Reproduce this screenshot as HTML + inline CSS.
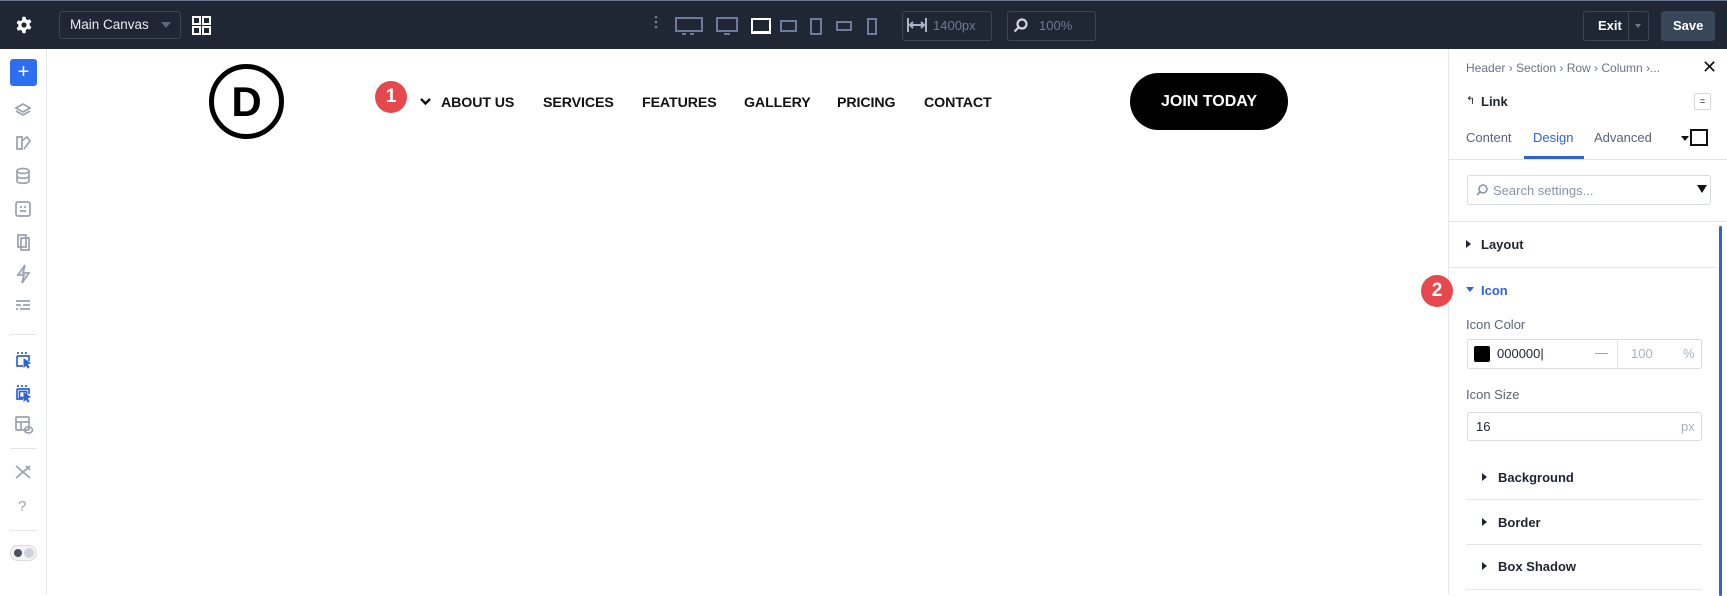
<!DOCTYPE html>
<html><head><meta charset="utf-8"><style>
*{box-sizing:border-box;margin:0;padding:0}
body{width:1727px;height:594px;overflow:hidden;background:#fff;font-family:"Liberation Sans",sans-serif;position:relative}
.a{position:absolute}
.top{left:0;top:0;width:1727px;height:49px;background:#1f2734;border-top:1px solid #6c7890}
.side{left:0;top:49px;width:47px;height:545px;background:#fff;border-right:1px solid #e3e6ea}
.panel{left:1448px;top:49px;width:279px;height:545px;background:#fff;border-left:1px solid #e3e6ea}
.nav{font-size:14.2px;font-weight:bold;color:#111;top:95px;letter-spacing:-0.1px}
.gi{color:#8b93a3;font-size:13px}
.lbl{font-size:13px;color:#5a6478}
.sec{font-size:13px;font-weight:bold;color:#1e2430}
.tri{width:0;height:0;border-top:4px solid transparent;border-bottom:4px solid transparent;border-left:5px solid #1e2430}
.inp{border:1px solid #d8dce2;border-radius:3px;background:#fff}
.line{height:1px;background:#e2e5e9}
</style></head><body>
<div class="a top">
 <svg class="a" style="left:15px;top:15px" width="18" height="18" viewBox="0 0 24 24"><path fill="#fff" fill-rule="evenodd" d="M10 1h4l.6 3.2a8 8 0 012.2 1.3l3.1-1.1 2 3.5-2.5 2.1a8 8 0 010 2.6l2.5 2.1-2 3.5-3.1-1.1a8 8 0 01-2.2 1.3L14 23h-4l-.6-3.2a8 8 0 01-2.2-1.3l-3.1 1.1-2-3.5 2.5-2.1a8 8 0 010-2.6L2.1 9.3l2-3.5 3.1 1.1a8 8 0 012.2-1.3zM12 8.5a3.5 3.5 0 100 7 3.5 3.5 0 000-7z"/></svg>
 <div class="a inp" style="left:59px;top:10px;width:122px;height:28px;background:#1f2734;border-color:#3b4556"></div>
 <div class="a" style="left:70px;top:16px;color:#e8ebf0;font-size:13.5px">Main Canvas</div>
 <div class="a" style="left:161px;top:21px;border-left:5px solid transparent;border-right:5px solid transparent;border-top:6px solid #5d6880"></div>
 <svg class="a" style="left:192px;top:15px" width="19" height="19" viewBox="0 0 19 19" fill="none" stroke="#fff" stroke-width="2"><rect x="1" y="1" width="7" height="7"/><rect x="11" y="1" width="7" height="7"/><rect x="1" y="11" width="7" height="7"/><rect x="11" y="11" width="7" height="7"/></svg>
 <svg class="a" style="left:650px;top:12px" width="230" height="24" fill="none" stroke="#6d7c9c" stroke-width="2">
  <circle cx="6" cy="4" r="1.3" fill="#6d7c9c" stroke="none"/><circle cx="6" cy="9" r="1.3" fill="#6d7c9c" stroke="none"/><circle cx="6" cy="14" r="1.3" fill="#6d7c9c" stroke="none"/>
  <rect x="26" y="5" width="26" height="13"/><path d="M32 21h4M40 21h4"/>
  <rect x="67" y="5" width="20" height="13"/><path d="M74 21h6"/>
  <rect x="102" y="6" width="18" height="13" stroke="#fff"/><path d="M101 20h20" stroke="#fff"/>
  <rect x="131" y="8" width="15" height="10"/>
  <rect x="161" y="6" width="10" height="15"/>
  <rect x="187" y="9" width="14" height="8"/>
  <rect x="218" y="6" width="8" height="15"/>
 </svg>
 <div class="a inp" style="left:902px;top:10px;width:90px;height:30px;background:#1f2734;border-color:#3b4556"></div>
 <svg class="a" style="left:907px;top:17px" width="20" height="14" stroke="#aab4c8" stroke-width="2" fill="none"><path d="M1 0v14M19 0v14M3 7h14M6 4l-3 3 3 3M14 4l3 3-3 3"/></svg>
 <div class="a" style="left:933px;top:17px;color:#6d7a93;font-size:13px">1400px</div>
 <div class="a inp" style="left:1007px;top:10px;width:89px;height:30px;background:#1f2734;border-color:#3b4556"></div>
 <svg class="a" style="left:1013px;top:17px" width="15" height="15" fill="none" stroke="#d0d6e0" stroke-width="2.2"><circle cx="9" cy="6" r="4.5"/><path d="M5.5 9.5L1.5 13.5"/></svg>
 <div class="a" style="left:1039px;top:17px;color:#6d7a93;font-size:13px">100%</div>
 <div class="a inp" style="left:1583px;top:10px;width:66px;height:30px;background:#1f2734;border-color:#3b4556"></div>
 <div class="a" style="left:1598px;top:17px;color:#fff;font-size:13px;font-weight:bold">Exit</div>
 <div class="a" style="left:1628px;top:10px;width:1px;height:30px;background:#3b4556"></div>
 <div class="a" style="left:1635px;top:23px;border-left:3px solid transparent;border-right:3px solid transparent;border-top:4px solid #6d7a93"></div>
 <div class="a" style="left:1661px;top:10px;width:54px;height:30px;background:#394559;border-radius:3px"></div>
 <div class="a" style="left:1673px;top:17px;color:#fff;font-size:13px;font-weight:bold">Save</div>
</div>

<div class="a side">
 <div class="a" style="left:10px;top:10px;width:27px;height:27px;background:#2e6ff0;border-radius:3px;color:#fff;font-size:20px;text-align:center;line-height:26px">+</div>
 <svg class="a" style="left:13px;top:52px" width="22" height="340" fill="none" stroke="#9aa1af" stroke-width="1.7">
  <path d="M10 3l7 4-7 4-7-4zM3 10l7 4 7-4"/>
  <path d="M4 48v-12h5v12h-5zM9 40l5-4 3 4-6 8"/>
  <ellipse cx="10" cy="70" rx="6" ry="2.5"/><path d="M4 70v10c0 3 12 3 12 0v-10M4 75c0 3 12 3 12 0"/>
  <rect x="3" y="101" width="14" height="14" rx="2"/><path d="M7 106h2M11 106h2M7 110h6"/>
  <path d="M8 137h8v12h-8zM5 134h8v12h-8z"/>
  <path d="M12 132l-7 10h6l-2 8 7-10h-6z" transform="translate(0,32)"/>
  <path d="M3 200h14M3 204h5M10 204h7M3 208h2M7 208h10" />
  <path d="M4 252h2M8 252h2M12 252h2M4 255v10h6M4 255h12v5" stroke="#2e63d8"/><path d="M11 258l6 4-3 1 2 3-1 1-2-3-2 2z" fill="#2e63d8" stroke="#2e63d8" stroke-width="1"/>
  <path d="M4 285h2M8 285h2M12 285h2M4 288v10h6M4 288h12v5" stroke="#2e63d8"/><rect x="6.5" y="290.5" width="7" height="6" stroke="#2e63d8"/><path d="M11 292l6 4-3 1 2 3-1 1-2-3-2 2z" fill="#2e63d8" stroke="#2e63d8" stroke-width="1"/>
  <rect x="3" y="316" width="13" height="13" rx="1"/><path d="M3 321h13M8 321v8"/><ellipse cx="15.5" cy="329" rx="4" ry="3"/>
 </svg>
 <div class="a line" style="left:10px;top:285px;width:27px"></div>
 <div class="a line" style="left:10px;top:399px;width:27px"></div>
 <svg class="a" style="left:14px;top:415px" width="18" height="16" fill="none" stroke="#9aa1af" stroke-width="1.8"><path d="M2 2l14 12M16 2L2 14M12 2l4 4"/></svg>
 <div class="a" style="left:18px;top:449px;color:#9aa1af;font-size:15px">?</div>
 <div class="a line" style="left:10px;top:481px;width:27px"></div>
 <div class="a" style="left:10px;top:496px;width:27px;height:16px;border:1px solid #d7dbe1;border-radius:8px;background:#f3f4f6"></div>
 <div class="a" style="left:14px;top:500px;width:8px;height:8px;border-radius:50%;background:#4b5262"></div>
 <div class="a" style="left:24px;top:499px;width:10px;height:10px;border-radius:50%;background:#d0d4da"></div>
</div>

<div class="a" style="left:209px;top:64px;width:75px;height:75px;border:5px solid #000;border-radius:50%;display:flex;align-items:center;justify-content:center;font-size:42px;font-weight:bold;color:#000;padding-top:1px">D</div>
<div class="a" style="left:375px;top:81px;width:32px;height:32px;border-radius:50%;background:#e5484d;color:#fff;font-weight:bold;font-size:19px;text-align:center;line-height:32px">1</div>
<svg class="a" style="left:420px;top:98px" width="11" height="8"><path d="M1 1l4.5 4.5L10 1" stroke="#111" stroke-width="2.4" fill="none"/></svg>
<div class="a nav" style="left:441px">ABOUT US</div>
<div class="a nav" style="left:543px">SERVICES</div>
<div class="a nav" style="left:642px">FEATURES</div>
<div class="a nav" style="left:744px">GALLERY</div>
<div class="a nav" style="left:837px">PRICING</div>
<div class="a nav" style="left:924px">CONTACT</div>
<div class="a" style="left:1130px;top:73px;width:158px;height:57px;border-radius:29px;background:#000;color:#fff;font-size:16px;font-weight:bold;text-align:center;line-height:57px">JOIN TODAY</div>

<div class="a panel">
 <div class="a" style="left:17px;top:12px;font-size:12px;color:#6b7383">Header › Section › Row › Column ›...</div>
 <div class="a" style="left:253px;top:8px;font-size:18px;color:#111">✕</div>
 <div class="a" style="left:17px;top:45px;font-size:11px;color:#333">↰</div>
 <div class="a" style="left:32px;top:45px;font-size:13px;font-weight:bold;color:#1e2430">Link</div>
 <div class="a" style="left:245px;top:44px;width:17px;height:17px;border:1px solid #d5d9df;border-radius:2px;font-size:9px;text-align:center;line-height:14px">=</div>
 <div class="a" style="left:17px;top:81px;font-size:13px;color:#5a6478">Content</div>
 <div class="a" style="left:84px;top:81px;font-size:13px;color:#2e63d8">Design</div>
 <div class="a" style="left:145px;top:81px;font-size:13px;color:#5a6478">Advanced</div>
 <div class="a" style="left:232px;top:87px;border-left:4px solid transparent;border-right:4px solid transparent;border-top:5px solid #111"></div>
 <div class="a" style="left:241px;top:80px;width:18px;height:17px;border:2px solid #111"></div>
 <div class="a line" style="left:0;top:110px;width:279px"></div>
 <div class="a" style="left:75px;top:107px;width:60px;height:3px;background:#2e63d8"></div>
 <div class="a inp" style="left:18px;top:126px;width:244px;height:30px"></div>
 <svg class="a" style="left:27px;top:135px" width="12" height="12" fill="none" stroke="#8b93a3" stroke-width="1.6"><circle cx="7" cy="5" r="4"/><path d="M4 8L1 11"/></svg>
 <div class="a gi" style="left:44px;top:134px">Search settings...</div>
 <div class="a" style="left:248px;top:136px;border-left:5px solid transparent;border-right:5px solid transparent;border-top:8px solid #111"></div>
 <div class="a line" style="left:0;top:172px;width:279px"></div>
 <div class="a tri" style="left:17px;top:191px"></div>
 <div class="a sec" style="left:32px;top:188px">Layout</div>
 <div class="a line" style="left:0;top:218px;width:267px"></div>
 <div class="a" style="left:17px;top:238px;border-left:4px solid transparent;border-right:4px solid transparent;border-top:5px solid #2e63d8"></div>
 <div class="a sec" style="left:32px;top:234px;color:#2e63d8">Icon</div>
 <div class="a lbl" style="left:17px;top:268px">Icon Color</div>
 <div class="a inp" style="left:18px;top:290px;width:235px;height:30px"></div>
 <div class="a" style="left:168px;top:291px;width:1px;height:28px;background:#e0e3e8"></div>
 <div class="a" style="left:25px;top:297px;width:16px;height:16px;background:#000;border-radius:2px"></div>
 <div class="a" style="left:48px;top:297px;font-size:13px;color:#1e2430">000000|</div>
 <div class="a gi" style="left:146px;top:296px">—</div>
 <div class="a gi" style="left:182px;top:297px;color:#aab0bb">100</div>
 <div class="a gi" style="left:234px;top:297px;color:#aab0bb">%</div>
 <div class="a lbl" style="left:17px;top:338px">Icon Size</div>
 <div class="a inp" style="left:18px;top:363px;width:235px;height:29px"></div>
 <div class="a" style="left:27px;top:370px;font-size:13px;color:#1e2430">16</div>
 <div class="a gi" style="left:232px;top:370px;color:#aab0bb">px</div>
 <div class="a tri" style="left:33px;top:424px"></div>
 <div class="a sec" style="left:49px;top:421px">Background</div>
 <div class="a line" style="left:17px;top:450px;width:236px"></div>
 <div class="a tri" style="left:33px;top:469px"></div>
 <div class="a sec" style="left:49px;top:466px">Border</div>
 <div class="a line" style="left:17px;top:495px;width:236px"></div>
 <div class="a tri" style="left:33px;top:513px"></div>
 <div class="a sec" style="left:49px;top:510px">Box Shadow</div>
 <div class="a line" style="left:17px;top:540px;width:236px"></div>
 <div class="a" style="left:270px;top:177px;width:3px;height:370px;background:#2e63d8;border-radius:2px"></div>
</div>
<div class="a" style="left:1421px;top:275px;width:32px;height:32px;border-radius:50%;background:#e5484d;color:#fff;font-weight:bold;font-size:19px;text-align:center;line-height:32px">2</div>
</body></html>
